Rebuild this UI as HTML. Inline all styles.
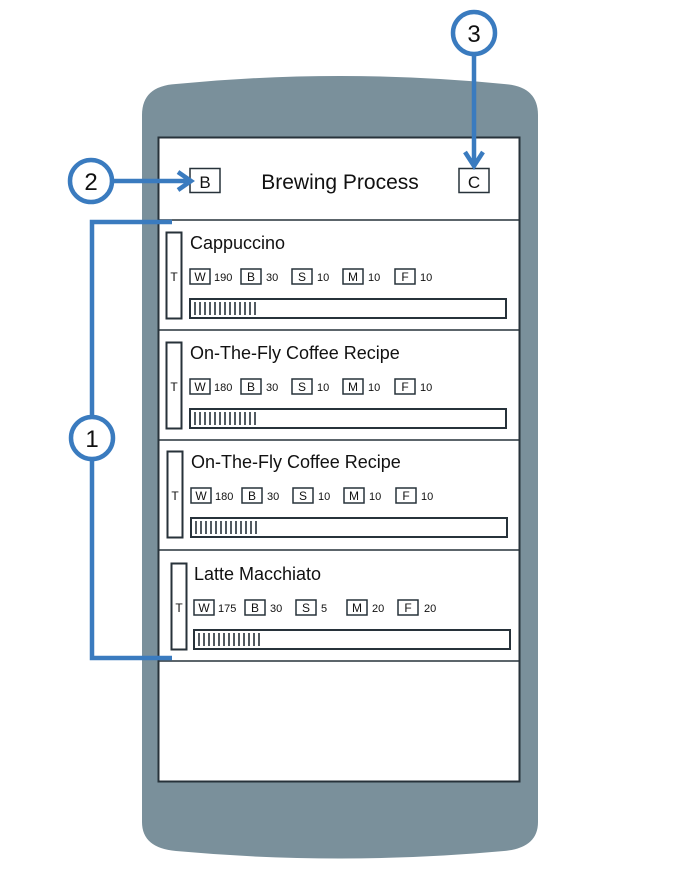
<!DOCTYPE html>
<html><head><meta charset="utf-8"><style>
html,body{margin:0;padding:0;background:#fff;width:680px;height:870px;overflow:hidden}
svg{display:block}
text{font-family:"Comic Sans MS","Liberation Sans",sans-serif;fill:#111}
</style></head><body>
<svg width="680" height="870" viewBox="0 0 680 870">
<defs>
<g id="badge"><rect width="20" height="15" fill="#fff" stroke="#27323a" stroke-width="1.5"/></g>
</defs>
<path d="M142,115 Q142,86 176,84 Q340,68 504,84 Q538,86 538,115 L538,822 Q538,848 504,851 Q340,866 176,851 Q142,848 142,822 Z" fill="#7a909b"/>
<rect x="158.5" y="137.5" width="361" height="644" fill="#fff" stroke="#27323a" stroke-width="2"/>
<line x1="158" y1="220" x2="519" y2="220" stroke="#27323a" stroke-width="1.5"/>
<line x1="158" y1="330" x2="519" y2="330" stroke="#27323a" stroke-width="1.5"/>
<line x1="158" y1="440" x2="519" y2="440" stroke="#27323a" stroke-width="1.5"/>
<line x1="158" y1="550" x2="519" y2="550" stroke="#27323a" stroke-width="1.5"/>
<line x1="158" y1="661" x2="519" y2="661" stroke="#27323a" stroke-width="1.5"/>

<rect x="190" y="168.5" width="30" height="24" fill="#fff" stroke="#27323a" stroke-width="1.5"/>
<text x="205" y="188" font-size="17" text-anchor="middle">B</text>
<text x="340" y="189" font-size="21" text-anchor="middle">Brewing Process</text>
<rect x="459" y="168.5" width="30" height="24" fill="#fff" stroke="#27323a" stroke-width="1.5"/>
<text x="474" y="188" font-size="17" text-anchor="middle">C</text>

<g id="c1">
<rect x="166.5" y="232.5" width="15" height="86" fill="none" stroke="#27323a" stroke-width="2"/>
<text x="174" y="281" font-size="12" text-anchor="middle">T</text>
<text x="190" y="249" font-size="18">Cappuccino</text>
<use href="#badge" x="190" y="269"/><text x="200" y="281" font-size="12" text-anchor="middle">W</text><text x="214" y="281" font-size="11">190</text>
<use href="#badge" x="241" y="269"/><text x="251" y="281" font-size="12" text-anchor="middle">B</text><text x="266" y="281" font-size="11">30</text>
<use href="#badge" x="292" y="269"/><text x="302" y="281" font-size="12" text-anchor="middle">S</text><text x="317" y="281" font-size="11">10</text>
<use href="#badge" x="343" y="269"/><text x="353" y="281" font-size="12" text-anchor="middle">M</text><text x="368" y="281" font-size="11">10</text>
<use href="#badge" x="395" y="269"/><text x="405" y="281" font-size="12" text-anchor="middle">F</text><text x="420" y="281" font-size="11">10</text>
<rect x="190" y="299" width="316" height="19" fill="none" stroke="#27323a" stroke-width="2"/>
<path d="M195,302v13M200,302v13M205,302v13M210,302v13M215,302v13M220,302v13M225,302v13M230,302v13M235,302v13M240,302v13M245,302v13M250,302v13M255,302v13" stroke="#27323a" stroke-width="1.6"/>
</g>

<g transform="translate(0,110)">
<rect x="166.5" y="232.5" width="15" height="86" fill="none" stroke="#27323a" stroke-width="2"/>
<text x="174" y="281" font-size="12" text-anchor="middle">T</text>
<text x="190" y="249" font-size="18">On-The-Fly Coffee Recipe</text>
<use href="#badge" x="190" y="269"/><text x="200" y="281" font-size="12" text-anchor="middle">W</text><text x="214" y="281" font-size="11">180</text>
<use href="#badge" x="241" y="269"/><text x="251" y="281" font-size="12" text-anchor="middle">B</text><text x="266" y="281" font-size="11">30</text>
<use href="#badge" x="292" y="269"/><text x="302" y="281" font-size="12" text-anchor="middle">S</text><text x="317" y="281" font-size="11">10</text>
<use href="#badge" x="343" y="269"/><text x="353" y="281" font-size="12" text-anchor="middle">M</text><text x="368" y="281" font-size="11">10</text>
<use href="#badge" x="395" y="269"/><text x="405" y="281" font-size="12" text-anchor="middle">F</text><text x="420" y="281" font-size="11">10</text>
<rect x="190" y="299" width="316" height="19" fill="none" stroke="#27323a" stroke-width="2"/>
<path d="M195,302v13M200,302v13M205,302v13M210,302v13M215,302v13M220,302v13M225,302v13M230,302v13M235,302v13M240,302v13M245,302v13M250,302v13M255,302v13" stroke="#27323a" stroke-width="1.6"/>
</g>

<g transform="translate(1,219)">
<rect x="166.5" y="232.5" width="15" height="86" fill="none" stroke="#27323a" stroke-width="2"/>
<text x="174" y="281" font-size="12" text-anchor="middle">T</text>
<text x="190" y="249" font-size="18">On-The-Fly Coffee Recipe</text>
<use href="#badge" x="190" y="269"/><text x="200" y="281" font-size="12" text-anchor="middle">W</text><text x="214" y="281" font-size="11">180</text>
<use href="#badge" x="241" y="269"/><text x="251" y="281" font-size="12" text-anchor="middle">B</text><text x="266" y="281" font-size="11">30</text>
<use href="#badge" x="292" y="269"/><text x="302" y="281" font-size="12" text-anchor="middle">S</text><text x="317" y="281" font-size="11">10</text>
<use href="#badge" x="343" y="269"/><text x="353" y="281" font-size="12" text-anchor="middle">M</text><text x="368" y="281" font-size="11">10</text>
<use href="#badge" x="395" y="269"/><text x="405" y="281" font-size="12" text-anchor="middle">F</text><text x="420" y="281" font-size="11">10</text>
<rect x="190" y="299" width="316" height="19" fill="none" stroke="#27323a" stroke-width="2"/>
<path d="M195,302v13M200,302v13M205,302v13M210,302v13M215,302v13M220,302v13M225,302v13M230,302v13M235,302v13M240,302v13M245,302v13M250,302v13M255,302v13" stroke="#27323a" stroke-width="1.6"/>
</g>

<g transform="translate(4,331)">
<rect x="167.5" y="232.5" width="15" height="86" fill="none" stroke="#27323a" stroke-width="2"/>
<text x="175" y="281" font-size="12" text-anchor="middle">T</text>
<text x="190" y="249" font-size="18">Latte Macchiato</text>
<use href="#badge" x="190" y="269"/><text x="200" y="281" font-size="12" text-anchor="middle">W</text><text x="214" y="281" font-size="11">175</text>
<use href="#badge" x="241" y="269"/><text x="251" y="281" font-size="12" text-anchor="middle">B</text><text x="266" y="281" font-size="11">30</text>
<use href="#badge" x="292" y="269"/><text x="302" y="281" font-size="12" text-anchor="middle">S</text><text x="317" y="281" font-size="11">5</text>
<use href="#badge" x="343" y="269"/><text x="353" y="281" font-size="12" text-anchor="middle">M</text><text x="368" y="281" font-size="11">20</text>
<use href="#badge" x="394" y="269"/><text x="404" y="281" font-size="12" text-anchor="middle">F</text><text x="420" y="281" font-size="11">20</text>
<rect x="190" y="299" width="316" height="19" fill="none" stroke="#27323a" stroke-width="2"/>
<path d="M195,302v13M200,302v13M205,302v13M210,302v13M215,302v13M220,302v13M225,302v13M230,302v13M235,302v13M240,302v13M245,302v13M250,302v13M255,302v13" stroke="#27323a" stroke-width="1.6"/>
</g>

<g stroke="#3a7bbf" stroke-width="4.5" fill="none">
<path d="M172,222 H92 V658 H172"/>
<path d="M113,181 H190 M178,172 L191,181 L178,190"/>
<path d="M474,55 V165 M465,152 L474,166 L483,152"/>
</g>
<g stroke="#3a7bbf" stroke-width="4.5" fill="#fff">
<circle cx="92" cy="438" r="21"/>
<circle cx="91" cy="181" r="21"/>
<circle cx="474" cy="33" r="21"/>
</g>
<text x="92" y="447" font-size="24" text-anchor="middle">1</text>
<text x="91" y="190" font-size="24" text-anchor="middle">2</text>
<text x="474" y="42" font-size="24" text-anchor="middle">3</text>
</svg>
</body></html>
